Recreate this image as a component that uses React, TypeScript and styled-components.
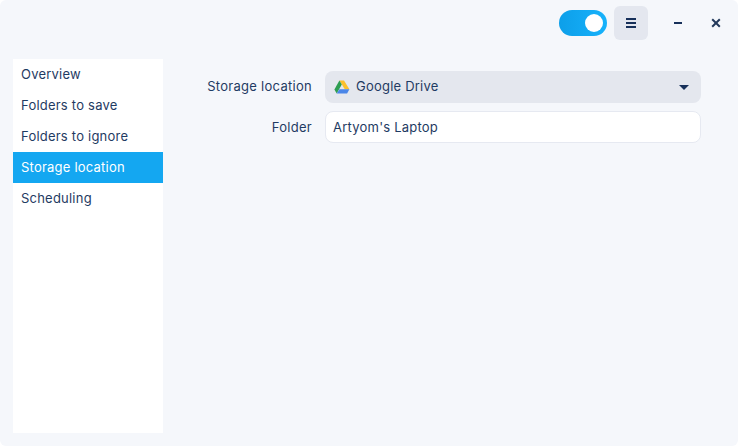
import React from "react";
import styled, { createGlobalStyle } from "styled-components";

const Global = createGlobalStyle`
  html, body { margin: 0; padding: 0; background: #ffffff; }
  #root { width: 738px; height: 446px; }
`;

const Window = styled.div`
  width: 738px;
  height: 446px;
  box-sizing: border-box;
  background: #f5f7fb;
  border-radius: 6px;
  overflow: hidden;
  display: flex;
  flex-direction: column;
  font-family: Inter, "Noto Sans", sans-serif;
  font-size: 13px;
  letter-spacing: 0.22px;
  color: #1f3b63;
`;

const TitleBar = styled.header`
  height: 59px;
  flex: none;
  box-sizing: border-box;
  padding: 6px 5px 0 0;
  display: flex;
  justify-content: flex-end;
  align-items: flex-start;
`;

const ToggleTrack = styled.div`
  width: 48px;
  height: 26px;
  margin: 4px 7px 0 0;
  box-sizing: border-box;
  padding: 4px;
  border-radius: 13px;
  background: linear-gradient(90deg, #0d9fe9, #17b2fb);
  display: flex;
  justify-content: flex-end;
`;

const ToggleKnob = styled.div`
  width: 18px;
  height: 18px;
  border-radius: 50%;
  background: #ffffff;
`;

const MenuButton = styled.button`
  width: 34px;
  height: 34px;
  padding: 0;
  border: 0;
  border-radius: 6px;
  background: #e4e7ef;
  display: flex;
  align-items: center;
  justify-content: center;
  margin-right: 13px;
`;

const WinButton = styled.button<{ $gap?: number }>`
  width: 34px;
  height: 34px;
  padding: 0;
  border: 0;
  margin-left: ${(p) => p.$gap ?? 0}px;
  background: transparent;
  display: flex;
  align-items: center;
  justify-content: center;
`;

const Body = styled.div`
  flex: 1;
  display: flex;
  padding: 0 13px 13px;
  min-height: 0;
`;

const Sidebar = styled.nav`
  width: 150px;
  flex: none;
  background: #ffffff;
  display: flex;
  flex-direction: column;
`;

const SideItem = styled.div<{ $active?: boolean }>`
  height: 31px;
  line-height: 31px;
  padding-left: 8px;
  background: ${(p) => (p.$active ? "#14a7f1" : "transparent")};
  color: ${(p) => (p.$active ? "#ffffff" : "#1f3b63")};
`;

const Form = styled.main`
  width: 538px;
  flex: none;
  box-sizing: border-box;
  padding-top: 12px;
  display: grid;
  grid-template-columns: 149px 376px;
  column-gap: 13px;
  row-gap: 8px;
  grid-auto-rows: 32px;
  align-content: start;
`;

const Label = styled.label<{ $lift?: boolean }>`
  text-align: right;
  line-height: ${(p) => (p.$lift ? 30 : 32)}px;
  letter-spacing: 0.28px;
`;

const Combo = styled.div`
  height: 32px;
  box-sizing: border-box;
  border-radius: 8px;
  background: #e4e7ee;
  padding: 0 12px 0 9px;
  display: flex;
  align-items: center;
  gap: 6px;
`;

const ComboText = styled.span`
  flex: 1;
  line-height: 30px;
  height: 30px;
  margin-top: -2px;
`;

const Entry = styled.div`
  height: 32px;
  box-sizing: border-box;
  border-radius: 8px;
  background: #ffffff;
  border: 1px solid #e6e9f1;
  padding: 0 7px;
  line-height: 30px;
`;

const DriveIcon = () => (
  <svg width="16" height="14" viewBox="0 0 16 14">
    <path d="M5.4 0.5h4.6L15.4 9.3h-4.6z" fill="#fbc02d" />
    <path d="M5.4 0.5L0.4 9.6l2.3 3.9L7.8 4.6z" fill="#2e9e52" />
    <path d="M5.4 9.3h10l-2.3 4.2H2.7z" fill="#4a86e8" />
  </svg>
);

const Caret = () => (
  <svg width="10" height="5" viewBox="0 0 10 5">
    <path d="M0 0h10L5 5z" fill="#17305a" />
  </svg>
);

const Hamburger = () => (
  <svg width="12" height="12" viewBox="0 0 12 12">
    <path d="M1 1h10v2H1zM1 5h10v2H1zM1 9h10v2H1z" fill="#17305a" />
  </svg>
);

const Minimize = () => (
  <svg width="10" height="4" viewBox="0 0 10 4">
    <rect x="1" y="1" width="8" height="2" fill="#17305a" />
  </svg>
);

const Close = () => (
  <svg width="10" height="10" viewBox="0 0 10 10">
    <path d="M1.2 1.2l7.6 7.6M8.8 1.2L1.2 8.8" stroke="#23395b" strokeWidth="2" />
  </svg>
);

const items = ["Overview", "Folders to save", "Folders to ignore", "Storage location", "Scheduling"];

export default function App() {
  return (
    <Window>
      <Global />
      <TitleBar>
        <ToggleTrack>
          <ToggleKnob />
        </ToggleTrack>
        <MenuButton aria-label="Menu">
          <Hamburger />
        </MenuButton>
        <WinButton aria-label="Minimize">
          <Minimize />
        </WinButton>
        <WinButton aria-label="Close" $gap={4}>
          <Close />
        </WinButton>
      </TitleBar>
      <Body>
        <Sidebar>
          {items.map((t) => (
            <SideItem key={t} $active={t === "Storage location"}>
              {t}
            </SideItem>
          ))}
        </Sidebar>
        <Form>
          <Label $lift>Storage location</Label>
          <Combo>
            <DriveIcon />
            <ComboText>Google Drive</ComboText>
            <Caret />
          </Combo>
          <Label>Folder</Label>
          <Entry>Artyom's Laptop</Entry>
        </Form>
      </Body>
    </Window>
  );
}
